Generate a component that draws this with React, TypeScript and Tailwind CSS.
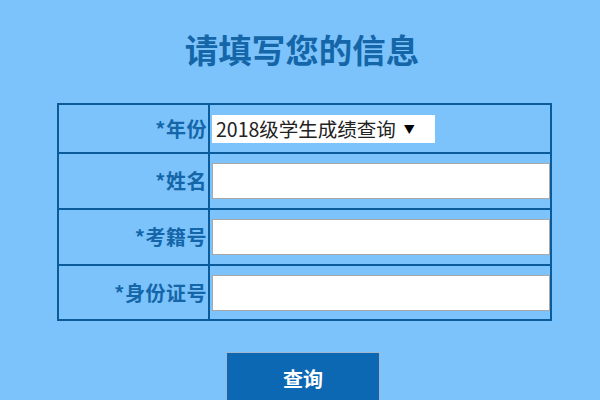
export default function App() {
  const rows = [
    { label: '*姓名', h: 'h-[56px]' },
    { label: '*考籍号', h: 'h-[56px]' },
    { label: '*身份证号', h: 'h-[55px]' },
  ];

  return (
    <div
      className="w-[600px] h-[400px] overflow-hidden bg-[#7cc3fb]"
      style={{ fontFamily: '"Noto Sans CJK SC", "Noto Sans", sans-serif' }}
    >
      <h1 className="pt-[26px] h-[103px] text-center text-[33.5px] leading-[46px] font-bold text-[#1466a8] pl-[4px]">
        请填写您的信息
      </h1>

      <table className="ml-[57px] w-[495px] border-collapse border-2 border-[#0b5a99]">
        <tbody>
          <tr className="h-[49px]">
            <td className="w-[151px] border-2 border-[#0b5a99] text-right pr-[1px] text-[20px] font-bold text-[#1466a8] tracking-[0.5px]">
              *年份
            </td>
            <td className="border-2 border-[#0b5a99] pl-[2px]">
              <div className="w-[223px] h-[28px] bg-white flex items-center pl-[4px] text-[19.5px] leading-[28px] text-[#222]">
                <span>2018级学生成绩查询</span>
                <span className="ml-[8px] text-[11px] text-black">▼</span>
              </div>
            </td>
          </tr>
          {rows.map((r) => (
            <tr key={r.label} className={r.h}>
              <td className="border-2 border-[#0b5a99] text-right pr-[1px] text-[20px] font-bold text-[#1466a8] tracking-[0.5px]">
                {r.label}
              </td>
              <td className="border-2 border-[#0b5a99] pl-[2px]">
                <input
                  type="text"
                  className="block w-[338px] h-[36px] bg-white border border-[#a8a8a8] outline-none"
                />
              </td>
            </tr>
          ))}
        </tbody>
      </table>

      <div className="flex justify-center pt-[31px] pl-[6px]">
        <button className="w-[154px] h-[52px] bg-[#0c68b3] border border-[#9fb8d0] text-white font-bold text-[20px] leading-[28px] pt-[2px]">
          查询
        </button>
      </div>
    </div>
  );
}
